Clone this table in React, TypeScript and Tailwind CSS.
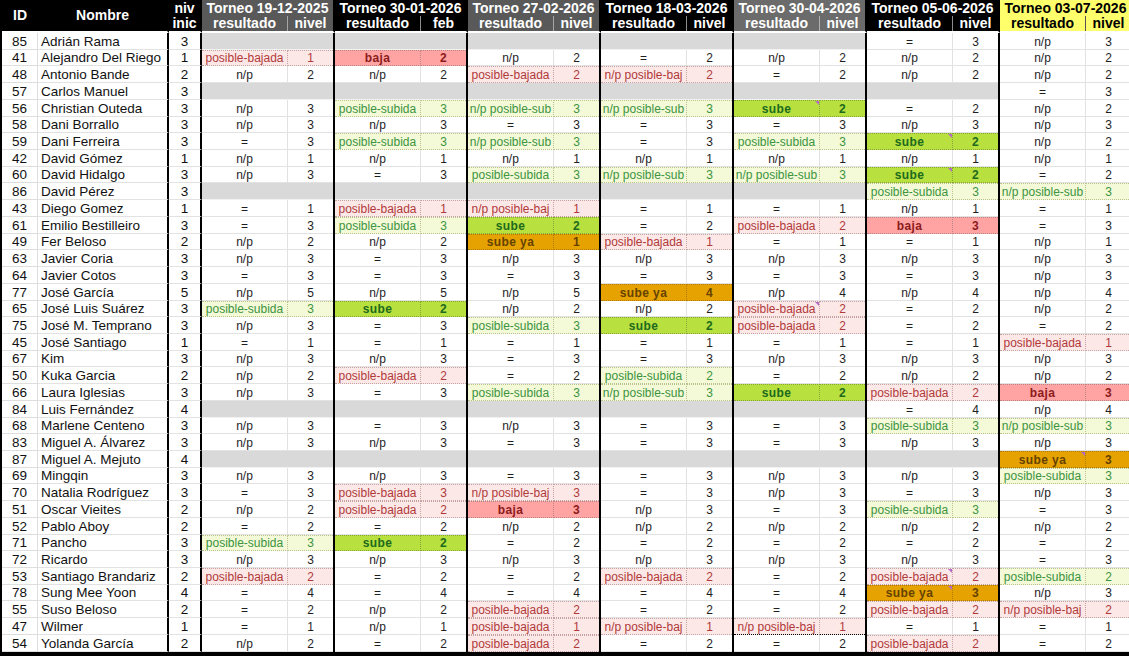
import React from 'react';

const TORNEOS = [
  { fecha: '19-12-2025', bg: 'bg-[#595959] text-white', div: 'border-[#a5a5a5]', lvl: 'nivel' },
  { fecha: '30-01-2026', bg: 'bg-black text-white', div: 'border-[#8c8c8c]', lvl: 'feb' },
  { fecha: '27-02-2026', bg: 'bg-[#595959] text-white', div: 'border-[#a5a5a5]', lvl: 'nivel' },
  { fecha: '18-03-2026', bg: 'bg-black text-white', div: 'border-[#8c8c8c]', lvl: 'nivel' },
  { fecha: '30-04-2026', bg: 'bg-[#6b6b6b] text-white', div: 'border-[#b0b0b0]', lvl: 'nivel' },
  { fecha: '05-06-2026', bg: 'bg-black text-white', div: 'border-[#8c8c8c]', lvl: 'nivel' },
  { fecha: '03-07-2026', bg: 'bg-[#ffff6b] text-black', div: 'border-[#555]', lvl: 'nivel' },
];

// id, nombre, nivel inicial, resultados (codigo + nivel), x = no jugado
const JUGADORES: [number, string, number, string][] = [
  [85, 'Adrián Rama', 3, 'x x x x x eq3 np3'],
  [41, 'Alejandro Del Riego', 1, 'pb1 b2 np2 eq2 np2 np2 np2'],
  [48, 'Antonio Bande', 2, 'np2 np2 pb2 npb2 eq2 np2 np2'],
  [57, 'Carlos Manuel', 3, 'x x x x x x eq3'],
  [56, 'Christian Outeda', 3, 'np3 ps3 nps3 nps3 s2 eq2 np2'],
  [58, 'Dani Borrallo', 3, 'np3 np3 eq3 eq3 eq3 np3 np3'],
  [59, 'Dani Ferreira', 3, 'eq3 ps3 nps3 eq3 ps3 s2 np2'],
  [42, 'David Gómez', 1, 'np1 np1 np1 np1 np1 np1 np1'],
  [60, 'David Hidalgo', 3, 'np3 eq3 ps3 nps3 nps3 s2 eq2'],
  [86, 'David Pérez', 3, 'x x x x x ps3 nps3'],
  [43, 'Diego Gomez', 1, 'eq1 pb1 npb1 eq1 eq1 np1 eq1'],
  [61, 'Emilio Bestilleiro', 3, 'eq3 ps3 s2 eq2 pb2 b3 eq3'],
  [49, 'Fer Beloso', 2, 'np2 np2 sy1 pb1 eq1 eq1 np1'],
  [63, 'Javier Coria', 3, 'np3 eq3 np3 np3 np3 np3 np3'],
  [64, 'Javier Cotos', 3, 'eq3 eq3 eq3 eq3 eq3 eq3 np3'],
  [77, 'José García', 5, 'np5 np5 np5 sy4 np4 np4 np4'],
  [65, 'José Luis Suárez', 3, 'ps3 s2 np2 np2 pb2 eq2 np2'],
  [75, 'José M. Temprano', 3, 'np3 eq3 ps3 s2 pb2 eq2 eq2'],
  [45, 'José Santiago', 1, 'eq1 eq1 eq1 eq1 eq1 eq1 pb1'],
  [67, 'Kim', 3, 'np3 np3 eq3 eq3 np3 np3 np3'],
  [50, 'Kuka Garcia', 2, 'np2 pb2 eq2 ps2 eq2 np2 np2'],
  [66, 'Laura Iglesias', 3, 'np3 eq3 ps3 nps3 s2 pb2 b3'],
  [84, 'Luis Fernández', 4, 'x x x x x eq4 np4'],
  [68, 'Marlene Centeno', 3, 'np3 eq3 np3 eq3 eq3 ps3 nps3'],
  [83, 'Miguel A. Álvarez', 3, 'np3 np3 eq3 eq3 eq3 np3 np3'],
  [87, 'Miguel A. Mejuto', 4, 'x x x x x x sy3'],
  [69, 'Mingqin', 3, 'np3 np3 eq3 eq3 np3 np3 ps3'],
  [70, 'Natalia Rodríguez', 3, 'eq3 pb3 npb3 eq3 np3 eq3 np3'],
  [51, 'Oscar Vieites', 2, 'np2 pb2 b3 np3 eq3 ps3 eq3'],
  [52, 'Pablo Aboy', 2, 'eq2 eq2 np2 np2 np2 np2 np2'],
  [71, 'Pancho', 3, 'ps3 s2 eq2 eq2 eq2 eq2 eq2'],
  [72, 'Ricardo', 3, 'np3 np3 np3 np3 np3 np3 eq3'],
  [53, 'Santiago Brandariz', 2, 'pb2 eq2 eq2 pb2 eq2 pb2 ps2'],
  [78, 'Sung Mee Yoon', 4, 'eq4 eq4 eq4 eq4 eq4 sy3 np3'],
  [55, 'Suso Beloso', 2, 'eq2 np2 pb2 eq2 eq2 pb2 npb2'],
  [47, 'Wilmer', 1, 'eq1 np1 pb1 npb1 npb1 eq1 eq1'],
  [54, 'Yolanda García', 2, 'np2 eq2 pb2 eq2 eq2 pb2 eq2'],
];

// celdas con comentario (fila-torneo)
const COMENTARIOS = new Set(['4-4', '6-5', '8-5', '16-4', '25-6', '32-5', '33-5']);

const LABEL: Record<string, string> = {
  np: 'n/p',
  eq: '=',
  pb: 'posible-bajada',
  npb: 'n/p posible-baj',
  ps: 'posible-subida',
  nps: 'n/p posible-sub',
  s: 'sube',
  b: 'baja',
  sy: 'sube ya',
};

const PLAIN = 'bg-white text-[#1e1e1e] border-[#e2e2e2]';
const PB = 'bg-[#fde8e8] text-[#b03a3a] border-dotted border-[#c4a2a2]';
const PS = 'bg-[#f4f9d7] text-[#3c9440] border-dotted border-[#b9c28f]';

const STYLE: Record<string, string> = {
  np: PLAIN,
  eq: PLAIN,
  pb: PB,
  npb: PB,
  ps: PS,
  nps: PS,
  s: 'bg-[#b8e03e] text-[#1d6a1d] font-bold tracking-[0.4px] border-dotted border-[#86a63a]',
  b: 'bg-[#ffa3a3] text-[#8c1b1b] font-bold tracking-[0.4px] border-dotted border-[#b98484]',
  sy: 'bg-[#e6a200] text-[#654200] font-bold tracking-[0.4px] border-dotted border-[#b07c00]',
};

function Celda({ token, fila, t }: { token: string; fila: number; t: number }) {
  if (token === 'x') {
    return (
      <div className="flex w-[133px] shrink-0 border-r-2 border-black">
        <div className="flex-1 bg-[#d9d9d9] border-b border-[#f2f2f2]" />
      </div>
    );
  }
  const code = token.slice(0, -1);
  const nivel = token.slice(-1);
  const plain = code === 'np' || code === 'eq';
  const st = STYLE[code];
  const edge = plain ? 'border-b' : 'border-t border-b';
  const dashed = fila === 35 && t === 4 ? '!border-b-black !border-b-dashed' : '';
  return (
    <div className="flex w-[133px] shrink-0 border-r-2 border-black text-[12px] leading-[14px]">
      <div
        className={`relative w-[86px] shrink-0 flex items-end justify-center whitespace-nowrap border-r ${edge} ${st} ${dashed}`}
      >
        {LABEL[code]}
        {COMENTARIOS.has(`${fila}-${t}`) && (
          <span className="absolute top-0 right-0 w-0 h-0 border-l-[4px] border-l-transparent border-t-[4px] border-t-[#b569c9]" />
        )}
      </div>
      <div className={`flex-1 flex items-end justify-center ${edge} ${st} ${dashed}`}>{nivel}</div>
    </div>
  );
}

export default function App() {
  return (
    <div className="w-[1129px] h-[656px] overflow-hidden bg-black pl-[2px] font-['Liberation_Sans',Arial,sans-serif]">
      {/* Cabecera */}
      <div className="flex h-[33px] font-bold text-[14px] leading-[15px]">
        <div className="w-[36px] shrink-0 flex items-center justify-center bg-black text-white border-b-2 border-white">
          ID
        </div>
        <div className="w-[131px] shrink-0 flex items-center justify-center bg-black text-white border-b-2 border-white border-r-2 border-r-black">
          Nombre
        </div>
        <div className="w-[33px] shrink-0 flex flex-col items-center justify-center bg-black text-white border-b-2 border-white border-r-2 border-r-black">
          <span>niv</span>
          <span>inic</span>
        </div>
        {TORNEOS.map((t) => (
          <div
            key={t.fecha}
            className={`w-[133px] shrink-0 flex flex-col border-b-2 border-white border-r-2 border-r-black ${t.bg}`}
          >
            <div className="h-[16px] flex items-center justify-center whitespace-nowrap">Torneo {t.fecha}</div>
            <div className="flex-1 flex">
              <div className={`w-[86px] shrink-0 flex items-center justify-center border-r ${t.div}`}>resultado</div>
              <div className="flex-1 flex items-center justify-center">{t.lvl}</div>
            </div>
          </div>
        ))}
      </div>

      {/* Filas */}
      {JUGADORES.map(([id, nombre, niv, res], i) => (
        <div key={id} className="flex h-[16.73px] text-[13.5px] leading-[15px] text-[#111]">
          <div className="w-[36px] shrink-0 flex items-end justify-center bg-white border-b border-r border-[#dedede]">
            {id}
          </div>
          <div className="w-[131px] shrink-0 flex items-end pl-[3px] whitespace-nowrap bg-white border-b border-b-[#e2e2e2] border-r-2 border-r-black">
            {nombre}
          </div>
          <div className="w-[33px] shrink-0 flex items-end justify-center bg-white border-b border-b-[#e2e2e2] border-r-2 border-r-black">
            {niv}
          </div>
          {res.split(' ').map((tok, t) => (
            <Celda key={t} token={tok} fila={i} t={t} />
          ))}
        </div>
      ))}
    </div>
  );
}
